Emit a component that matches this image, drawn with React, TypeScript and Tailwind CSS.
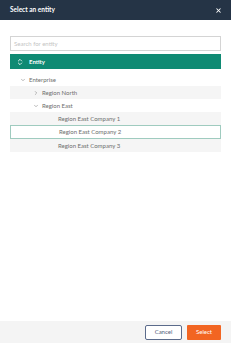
import { ChevronDown, ChevronRight, ChevronsUpDown, X } from 'lucide-react';

interface TreeRow {
  label: string;
  indent: number;
  chevron?: 'down' | 'right';
  shaded: boolean;
  selected?: boolean;
}

const rows: TreeRow[] = [
  { label: 'Enterprise', indent: 0, chevron: 'down', shaded: false },
  { label: 'Region North', indent: 1, chevron: 'right', shaded: true },
  { label: 'Region East', indent: 1, chevron: 'down', shaded: false },
  { label: 'Region East Company 1', indent: 2, shaded: true },
  { label: 'Region East Company 2', indent: 2, shaded: false, selected: true },
  { label: 'Region East Company 3', indent: 2, shaded: true },
];

function Row({ row }: { row: TreeRow }) {
  const pad = row.indent === 0 ? 'pl-[10px]' : row.indent === 1 ? 'pl-[23px]' : 'pl-[39px]';
  return (
    <div
      className={`h-[13px] flex items-center ${pad} ${row.shaded ? 'bg-[#f5f5f5]' : 'bg-white'} ${
        row.selected ? 'border border-[#9fcbbf] h-[14px]' : ''
      }`}
    >
      <span className="w-[9px] flex items-center text-[#777]">
        {row.chevron === 'down' && <ChevronDown className="w-[6px] h-[6px]" strokeWidth={2} />}
        {row.chevron === 'right' && <ChevronRight className="w-[6px] h-[6px]" strokeWidth={2} />}
      </span>
      <span className="text-[6px] text-[#6e6e6e] leading-none">{row.label}</span>
    </div>
  );
}

export default function App() {
  return (
    <div className="w-[231px] h-[343px] flex flex-col bg-white font-['Lato',sans-serif]">
      <div className="h-[20px] shrink-0 bg-[#253446] pl-[10px] pr-[9px] flex items-center justify-between">
        <span className="text-[6.5px] font-bold text-white leading-none">Select an entity</span>
        <X className="w-[7px] h-[7px] text-white" strokeWidth={3.5} />
      </div>

      <div className="flex-1 px-[10px] pt-[16px]">
        <div className="h-[15px] border border-[#d4d4d4] flex items-center px-[3px]">
          <span className="text-[6px] text-[#c4c4c4] leading-none">Search for entity</span>
        </div>
        <div className="mt-[3px] h-[15px] bg-[#0f8a73] flex items-center pl-[6px] gap-[5px]">
          <ChevronsUpDown className="w-[8px] h-[8px] text-white" strokeWidth={2.5} />
          <span className="text-[6px] font-bold text-white leading-none">Entity</span>
        </div>
        <div className="pt-[4px]">
          {rows.map((row) => (
            <Row key={row.label} row={row} />
          ))}
        </div>
      </div>

      <div className="h-[22px] shrink-0 bg-[#f4f4f4] flex items-center justify-end gap-[5px] px-[10px]">
        <button
          type="button"
          className="w-[37px] h-[15px] border border-[#5b6b8b] rounded-[2px] bg-white text-[6px] text-[#55607a] leading-none"
        >
          Cancel
        </button>
        <button
          type="button"
          className="w-[34px] h-[15px] rounded-[1px] bg-[#f26522] text-[6px] text-white leading-none"
        >
          Select
        </button>
      </div>
    </div>
  );
}
